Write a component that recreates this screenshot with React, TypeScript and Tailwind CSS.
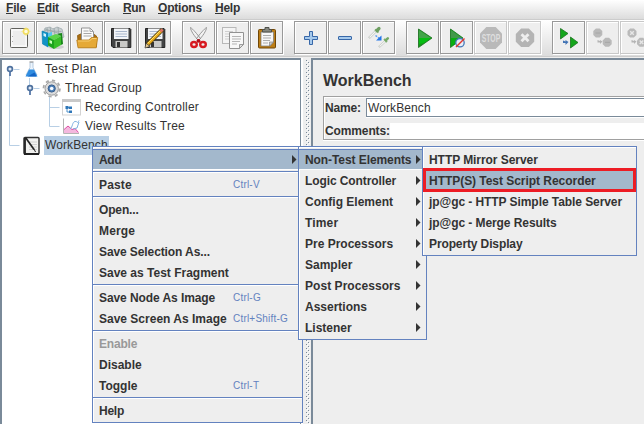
import React from "react";

const BOLD = "font-bold text-[12px] text-[#333333] whitespace-pre";

function Stop({ x, y, r, fill = "#b9b9b9" }: { x: number; y: number; r: number; fill?: string }) {
  const k = r * 0.42;
  return (
    <path
      fill={fill}
      d={`M${x - k} ${y - r}H${x + k}L${x + r} ${y - k}V${y + k}L${x + k} ${y + r}H${x - k}L${x - r} ${y + k}V${y - k}Z`}
    />
  );
}

function Floppy() {
  return (
    <>
      <path d="M7.500 7.500h18.500l.8.8v18.200H9l-1.500-1.500z" fill="#434445" stroke="#222" />
      <rect x="10" y="7.500" width="14.500" height="10.500" fill="#f3f5f8" />
      <path d="M11.500 10.500h11.500M11.500 13h11.500M11.500 15.500h11.500" stroke="#a9b7cc" strokeWidth="1" />
      <rect x="11.500" y="20" width="12" height="6.500" fill="#c9c9c7" />
      <rect x="13" y="21" width="3" height="5" fill="#333" />
    </>
  );
}

const icons = {
  blank: (
    <>
      <rect x="8.500" y="7.500" width="17" height="19" rx="1" fill="#f3f3f3" stroke="#62625e" />
      <rect x="10" y="9" width="14" height="16" fill="#ededed" stroke="#fff" />
      <path d="M10.500 15v1M10.500 20v1" stroke="#aaa" />
      <circle cx="24" cy="10.500" r="2.600" fill="#fffbe0" stroke="#f1dd62" strokeWidth="1.600" />
      <path d="M24 6v1.500M24 13.500V15M19.500 10.500H21M27 10.500h1.500" stroke="#f6e88f" />
    </>
  ),
  templates: (
    <>
      <ellipse cx="20" cy="26" rx="8" ry="2" fill="#cfcfcf" />
      <path d="M7 12l2-5 5-1 3 2 4-2 5 2 2 8-8 4-12 2z" fill="#c9d0d2" stroke="#9aa5a9" strokeWidth=".7" />
      <path d="M11 7l2 9M14 6l2 10M18 7l1 8M22 6l1 9M8.500 9.500l17 1M9 8l16 5" stroke="#98a4a7" strokeWidth=".8" />
      <path d="M6 10l6 2v14l-5.500-3z" fill="#1193c5" stroke="#087ab1" strokeWidth=".6" />
      <path d="M12 12l4-1v11l-4 4z" fill="#56c6ec" />
      <path d="M7.500 12v3l2.500 1v-3z" fill="#d5f3ff" />
      <path d="M12 16l8-3 5 2-7 4z" fill="#5bd549" />
      <path d="M12 16l6 3v9l-6-3.500z" fill="#1ca41c" />
      <path d="M18 19l7-4v9l-7 4z" fill="#38be27" />
      <path d="M21 13l5-1 1 11-2 1V15z" fill="#188718" />
      <path d="M13.500 19v3l2.500 1v-3z" fill="#caffbb" />
    </>
  ),
  open: (
    <>
      <path d="M7.500 14.500l3-1.500h13l3 2v11H8.500z" fill="#a96d12" stroke="#8a590a" strokeWidth=".8" />
      <path d="M11.500 7h8.500l3.500 3.500V20h-12z" fill="#fafafa" stroke="#929292" />
      <path d="M13.500 10h5M13.500 12.500h8M13.500 15h8M20 7v3.500h3" stroke="#a8a8a8" fill="none" />
      <path d="M6.800 19h12l2.500-2.500h6.400l-1.500 10.300H8z" fill="#e5a936" stroke="#b67b18" strokeWidth=".8" />
      <path d="M8 20h11.500l2.500-2.500h4.500" stroke="#f8ce70" fill="none" />
    </>
  ),
  save: <Floppy />,
  saveAs: (
    <>
      <Floppy />
      <path d="M9 24L24.500 8.500" stroke="#49360a" strokeWidth="4.200" />
      <path d="M9.500 23.500L23 10" stroke="#e8a91b" strokeWidth="2.800" />
      <path d="M9.500 22.500L22 10" stroke="#ffe36b" strokeWidth="1" />
      <path d="M22.500 10.500l2-2" stroke="#dd7465" strokeWidth="3" />
      <path d="M7 27l1-5 4 3.500z" fill="#e4c991" stroke="#333" strokeWidth=".7" />
    </>
  ),
  cut: (
    <>
      <path d="M8.500 6.500c0 3 4 9 8 13l2-2C15 13 11 8 8.500 6.500zM24.500 6.500c0 3-4 9-8 13l-2-2c3.500-4.500 7.500-9.500 10-11z" fill="#f3f3f3" stroke="#8c8c8c" strokeWidth=".9" />
      <path d="M15 19l3 2M18 19l-3 2" stroke="#b51018" strokeWidth="2.500" />
      <ellipse cx="12" cy="23.500" rx="2.800" ry="2.500" fill="#eee" stroke="#d71920" strokeWidth="2.400" />
      <ellipse cx="21" cy="23.500" rx="2.800" ry="2.500" fill="#eee" stroke="#d71920" strokeWidth="2.400" />
    </>
  ),
  copy: (
    <>
      <rect x="6.500" y="6.500" width="13.500" height="16" fill="#f4f4f4" stroke="#b8b8b8" />
      <path d="M9 10.500h8M9 13h8M9 15.500h4M9 18h4" stroke="#cfcfcf" />
      <path d="M13.500 11.500h14v12l-4 4h-10z" fill="#f8f8f8" stroke="#929292" />
      <path d="M16 15.500h9M16 18h9M16 20.500h8M16 23h5" stroke="#b5b5b5" />
      <path d="M23.500 27.500v-4h4z" fill="#ddd" stroke="#888" strokeWidth=".8" />
    </>
  ),
  paste: (
    <>
      <rect x="8.500" y="8.500" width="17" height="18.500" rx="1" fill="#bd7e16" stroke="#704707" />
      <path d="M11 11h12.500v10l-3.500 4h-9z" fill="#f7f7f7" stroke="#777" strokeWidth=".7" />
      <path d="M13 14.500h8M13 17h8M13 19.500h7M13 22h5" stroke="#adadad" />
      <path d="M19.500 25v-4h4z" fill="#ccc" stroke="#777" strokeWidth=".6" />
      <path d="M12.500 11V8.500h2.500V6.500h4v2h2.500V11z" fill="#85877f" stroke="#4d4f49" />
    </>
  ),
  plus: <path d="M15.500 10.500h3v5h5v3h-5v5h-3v-5h-5v-3h5z" fill="#a5c9ec" stroke="#3767a8" strokeLinejoin="round" />,
  minus: <rect x="10.500" y="15.500" width="13" height="3" rx=".4" fill="#a5c9ec" stroke="#3767a8" />,
  toggle: (
    <>
      <path d="M7 17l8-8" stroke="#b9beb7" strokeWidth="2.400" />
      <path d="M7.500 16.500l7-7" stroke="#f4f6f4" strokeWidth="1.200" />
      <path d="M13 8.500l3.500 3" stroke="#7fae72" strokeWidth="2" />
      <path d="M15 9.500l2-2" stroke="#6d9e61" strokeWidth="3.200" strokeLinecap="round" />
      <path d="M17 26l6.500-6" stroke="#b9beb7" strokeWidth="2.200" />
      <path d="M17.500 25.500l6-5.500" stroke="#f4f6f4" strokeWidth="1.100" />
      <path d="M22 18l3 3" stroke="#7fae72" strokeWidth="1.800" />
      <path d="M24 19l1.800-1.600" stroke="#74a866" strokeWidth="2.600" strokeLinecap="round" />
      <path d="M13.500 14.500l4 3" stroke="#5e9cec" strokeWidth="1.500" strokeDasharray="2 1" />
      <path d="M19.500 14.500v5h-5.500z" fill="#2476e8" />
    </>
  ),
  start: (
    <>
      <path d="M12.500 8l13.500 9-13.500 9.500z" fill="#159a18" stroke="#17691b" strokeWidth=".8" />
      <path d="M13 9l12 8H13z" fill="#42a548" />
      <path d="M13 17h12l-7 5-5 1z" fill="#07bd13" />
    </>
  ),
  startNoPause: (
    <>
      <path d="M10.500 8L23 17l-12.500 9.500z" fill="#08af10" stroke="#176e1b" strokeWidth=".8" />
      <path d="M11 9l11 8H11z" fill="#42994a" />
      <circle cx="20" cy="21.700" r="4.200" fill="#e6edf8" stroke="#4679b8" strokeWidth="1.300" />
      <path d="M16 26l8.500-8.500" stroke="#e5372c" strokeWidth="1.400" />
    </>
  ),
  stop: (
    <>
      <Stop x={17} y={17} r={11} />
      <text x="17" y="21" textAnchor="middle" textLength="18.500" lengthAdjust="spacingAndGlyphs" className="fill-[#dedede] text-[11px] font-bold">STOP</text>
    </>
  ),
  shutdown: (
    <>
      <Stop x={17} y={16.8} r={9.2} fill="#b4b4b4" />
      <path d="M13.500 13.300l7 7M20.500 13.300l-7 7" stroke="#eee" strokeWidth="2.800" />
    </>
  ),
  remoteStart: (
    <>
      <path d="M8.500 7.500l7.500 5-7.500 5.500z" fill="#14a51b" stroke="#1c741f" strokeWidth=".8" />
      <path d="M18.500 16l7.500 5.500-7.500 5.500z" fill="#14a51b" stroke="#1c741f" strokeWidth=".8" />
      <path d="M11 19.500v2.500h2.500v2l3-3-3-2v1.500z" fill="#4273b4" />
    </>
  ),
  remoteStop: (
    <>
      <Stop x={11.8} y={12} r={4.5} />
      <Stop x={21.2} y={21.3} r={4.5} />
      <path d="M9.500 12h5M19 21.300h5" stroke="#a6a6a6" />
      <path d="M11.500 19v2.500H14V23l2.500-2.500L14 19v1z" fill="#b4b4b4" />
    </>
  ),
  remoteShutdown: (
    <>
      <Stop x={12} y={12} r={4.5} />
      <Stop x={21.5} y={21.3} r={4.5} />
      <path d="M10.200 10.200l3.600 3.600M13.800 10.200l-3.600 3.600M19.700 19.500l3.600 3.600M23.300 19.500l-3.600 3.600" stroke="#e6e6e6" strokeWidth="1.400" />
      <path d="M11.500 19v2.500H14V23l2.500-2.500L14 19v1z" fill="#b4b4b4" />
    </>
  ),
};

type IconName = keyof typeof icons;

const toolbar: IconName[][] = [
  ["blank", "templates", "open", "save", "saveAs"],
  ["cut", "copy", "paste"],
  ["plus", "minus", "toggle"],
  ["start", "startNoPause", "stop", "shutdown"],
  ["remoteStart", "remoteStop", "remoteShutdown"],
];
const disabled: IconName[] = ["stop", "shutdown", "remoteStop", "remoteShutdown"];

function ToolButton({ name }: { name: IconName }) {
  return (
    <button
      className={`block h-[33px] w-[33px] shrink-0 border bg-[#eeeeee] shadow-[inset_1px_1px_0_#fff,1px_1px_0_#fff] ${
        disabled.includes(name) ? "border-[#c8c8c8]" : "border-[#999999]"
      }`}
    >
      <svg width="31" height="31" viewBox="1 1 31 31" className="block">
        {icons[name]}
      </svg>
    </button>
  );
}

function MenuBar() {
  const items: [string, string][] = [
    ["File", "w-[31px] tracking-[-0.2px]"],
    ["Edit", "w-[34px] tracking-[-0.2px]"],
    ["Search", "w-[52px] tracking-[-0.2px]"],
    ["Run", "w-[35px] tracking-[-0.4px]"],
    ["Options", "w-[57px] tracking-[-0.2px]"],
    ["Help", "w-[40px] tracking-[-0.25px]"],
  ];
  return (
    <nav className="flex h-[19px] shrink-0 bg-linear-to-b from-white to-[#dcdcdc] pl-[6px]">
      {items.map(([label, width]) => (
        <span key={label} className={`${BOLD} ${width} leading-[16px]`}>
          {label === "Search" ? (
            label
          ) : (
            <>
              <span className="inline-block h-[14px] border-b border-[#333] leading-[16px]">{label[0]}</span>
              {label.slice(1)}
            </>
          )}
        </span>
      ))}
    </nav>
  );
}

function TreeRow({ indent, icon, label, selected, tracking }: { indent: string; icon: React.ReactNode; label: string; selected?: boolean; tracking: string }) {
  return (
    <div className={`flex h-[19px] items-center ${indent}`}>
      <svg width="20" height="19" viewBox="0 0 20 19" className="shrink-0 overflow-visible">{icon}</svg>
      <span className={`h-[19px] px-px text-[12px] leading-[19px] whitespace-pre text-[#333333] ${tracking} ${selected ? "bg-[#b8cfe5]" : ""}`}>{label}</span>
    </div>
  );
}

function Handle({ x, y }: { x: number; y: number }) {
  return (
    <>
      <path d={`M${x} ${y + 2}v5`} stroke="#5577a8" strokeWidth="1.800" />
      <circle cx={x} cy={y} r="2.400" fill="#dfe8f5" stroke="#4f729f" strokeWidth="1.700" />
      <path d={`M${x + 3.5} ${y + 0.5}h6`} stroke="#b8cfe5" />
    </>
  );
}

function Tree() {
  return (
    <div className="relative w-[301px] shrink-0 border-t-2 border-r border-l-2 border-[#7a8a99] bg-white">
      <svg className="absolute top-0 left-0" width="70" height="100" viewBox="2 60 70 100">
        <path d="M9.500 74v71.500h10M29.500 78v8M49.500 97v29.500h10M49.500 107.500h10" fill="none" stroke="#b8cfe5" />
        <Handle x={10} y={69} />
        <Handle x={30} y={88} />
      </svg>
      <TreeRow
        indent="pl-[22px]"
        label="Test Plan"
        tracking="tracking-[0.25px]"
        icon={
          <>
            <path d="M6 2.500v5L2 15h11L9 7.500v-5z" fill="#edf5fc" stroke="#a5bed8" strokeWidth=".8" />
            <path d="M5 9.500h5l3.500 7H1.500z" fill="#318de0" />
            <path d="M3.500 16.500h9l-2-4z" fill="#1565c5" />
            <path d="M5.500 2h4" stroke="#aaa" strokeWidth="1.500" />
          </>
        }
      />
      <TreeRow
        indent="pl-[42px]"
        label="Thread Group"
        tracking="tracking-[0.18px]"
        icon={
          <>
            <circle cx="7.700" cy="9.500" r="8.200" fill="none" stroke="#a9a9a9" strokeWidth="1.800" strokeDasharray="3.200 3.240" />
            <circle cx="7.700" cy="9.500" r="6.700" fill="#dcdcdc" stroke="#9c9c9c" />
            <circle cx="7.700" cy="9.500" r="3.600" fill="#4a7fb8" stroke="#385d8b" />
            <circle cx="7.700" cy="9.500" r="1.800" fill="#f5f9ff" />
          </>
        }
      />
      <TreeRow
        indent="pl-[62px]"
        label="Recording Controller"
        tracking="tracking-[0.2px]"
        icon={
          <>
            <rect x="-1.500" y="1.500" width="18" height="15.500" fill="#fff" stroke="#d3d3d3" />
            <rect x="-2" y="1" width="19" height="3" fill="#c9c9c9" />
            <path d="M3 8v6h3M3 9.500h3" fill="none" stroke="#4f91ca" />
            <path d="M1.500 8h3v3h-3zM5 8.500h3v2.500H5zM5 12.500h3V15H5z" fill="#3077b8" />
          </>
        }
      />
      <TreeRow
        indent="pl-[62px]"
        label="View Results Tree"
        tracking="tracking-[0.2px]"
        icon={
          <>
            <path d="M-.500 16v-3l4.500-3.500 4 3 3-1 3.500 4.500z" fill="#f4b8de" />
            <path d="M-.500 13l4.500-4 4 3.500 3-1 3.500 4" fill="none" stroke="#dd4aa3" />
            <path d="M6 12c3-2 2-7 5-7.500s2 3 4-1M9 12l4-1 2-6" fill="none" stroke="#7fb0e0" />
            <path d="M-.500 1.500V16.500H15" fill="none" stroke="#b4b4b4" />
          </>
        }
      />
      <TreeRow
        indent="pl-[22px]"
        label="WorkBench"
        tracking="tracking-[0.1px]"
        selected
        icon={
          <>
            <rect x="0" y="1.500" width="15" height="16.500" rx="1" fill="#f1f1ef" stroke="#343434" strokeWidth="1.500" />
            <path d="M1 2v16M0 18h15" stroke="#222" strokeWidth="1.800" />
            <path d="M5 6h8M5 8.500h8M5 11h8M5 13.500h8" stroke="#d0d0d0" />
            <path d="M1.500 1.500l8.500 12" stroke="#222" strokeWidth="1.700" />
            <path d="M10 13l1.500 3" stroke="#222" />
          </>
        }
      />
    </div>
  );
}

function Splitter() {
  return (
    <div className="flex w-[10px] shrink-0 border-l-2 border-white bg-[#eeeeee] pt-[2px] pl-[3px]">
      <svg width="4" height="364">
        <defs>
          <pattern id="bumps" width="4" height="4" patternUnits="userSpaceOnUse">
            <rect width="1" height="1" fill="#7a8a99" />
            <rect x="1" y="1" width="1" height="1" fill="#fff" />
            <rect x="2" y="2" width="1" height="1" fill="#7a8a99" />
            <rect x="3" y="3" width="1" height="1" fill="#fff" />
          </pattern>
        </defs>
        <rect width="4" height="364" fill="url(#bumps)" />
      </svg>
    </div>
  );
}

function Editor() {
  return (
    <section className="flex flex-1 flex-col border-t-2 border-l-2 border-[#7a8a99] bg-[#eeeeee] pl-[10px]">
      <h1 className="h-[36px] pt-[9px] text-[16px] leading-[24px] font-bold text-[#333]">WorkBench</h1>
      <div className="flex h-[44px] flex-col border-y border-l border-[#a0a0a0] shadow-[inset_1px_1px_0_#fff,0_1px_0_#fff]">
        <div className="flex h-[20px] pt-px">
          <span className={`${BOLD} w-[42px] pl-px leading-[21px] tracking-[-0.15px]`}>Name:</span>
          <div className="h-[19px] flex-1 border-y border-l border-[#7a8a99] bg-white pl-px text-[12px] leading-[19px] tracking-[0.1px] text-[#333] shadow-[0_1px_0_#fff]">WorkBench</div>
        </div>
        <div className="mt-[6px] flex h-[16px]">
          <span className={`${BOLD} w-[66px] pl-px leading-[17px] tracking-[-0.12px]`}>Comments:</span>
          <div className="flex-1 bg-white" />
        </div>
      </div>
    </section>
  );
}

type Entry = { label: string; keys?: string; sub?: boolean; active?: boolean; off?: boolean; tracking?: string } | null;

function Menu({ entries, place }: { entries: Entry[]; place: string }) {
  return (
    <div className={`absolute top-[146px] border border-[#6382bf] bg-[#eeeeee] pt-[2px] pb-px shadow-[inset_1px_1px_0_#fff] ${place}`}>
      {entries.map((e, i) =>
        e === null ? (
          <div key={i} className="h-[4px] pt-px">
            <div className="h-[2px] border-t border-b border-t-[#6382bf] border-b-white" />
          </div>
        ) : (
          <div
            key={i}
            className={`relative flex h-[21px] items-center pl-[6px] ${
              e.active ? "border-t border-b border-t-[#6382bf] border-b-white bg-[#a3b8cc]" : ""
            }`}
          >
            <span className={`font-bold text-[12px] whitespace-pre ${e.off ? "text-[#999999]" : "text-[#333333]"} ${e.tracking ?? ""}`}>{e.label}</span>
            {e.keys && <span className="absolute left-[140px] text-[10px] tracking-[0.2px] whitespace-pre text-[#6382bf]">{e.keys}</span>}
            {e.sub && (
              <svg className={e.label === "Add" ? "absolute left-[199px]" : "absolute right-[5px]"} width="5" height="9" viewBox="0 0 5 9">
                <path d="M0 0v9l4.500-4.500z" fill="#333" />
              </svg>
            )}
          </div>
        ),
      )}
    </div>
  );
}

const contextMenu: Entry[] = [
  { label: "Add", sub: true, active: true, tracking: "tracking-[-0.3px]" },
  null,
  { label: "Paste", keys: "Ctrl-V", tracking: "tracking-[0.15px]" },
  null,
  { label: "Open...", tracking: "tracking-[-0.15px]" },
  { label: "Merge", tracking: "tracking-[0.15px]" },
  { label: "Save Selection As...", tracking: "tracking-[-0.1px]" },
  { label: "Save as Test Fragment" },
  null,
  { label: "Save Node As Image", keys: "Ctrl-G", tracking: "tracking-[-0.08px]" },
  { label: "Save Screen As Image", keys: "Ctrl+Shift-G" },
  null,
  { label: "Enable", off: true, tracking: "tracking-[-0.2px]" },
  { label: "Disable" },
  { label: "Toggle", keys: "Ctrl-T" },
  null,
  { label: "Help", tracking: "tracking-[-0.25px]" },
];

const addMenu: Entry[] = [
  { label: "Non-Test Elements", sub: true, active: true, tracking: "tracking-[-0.08px]" },
  { label: "Logic Controller", sub: true, tracking: "tracking-[-0.1px]" },
  { label: "Config Element", sub: true },
  { label: "Timer", sub: true, tracking: "tracking-[0.15px]" },
  { label: "Pre Processors", sub: true },
  { label: "Sampler", sub: true },
  { label: "Post Processors", sub: true, tracking: "tracking-[0.05px]" },
  { label: "Assertions", sub: true },
  { label: "Listener", sub: true },
];

const nonTestMenu: Entry[] = [
  { label: "HTTP Mirror Server", tracking: "tracking-[-0.06px]" },
  { label: "HTTP(S) Test Script Recorder", active: true, tracking: "tracking-[-0.04px]" },
  { label: "jp@gc - HTTP Simple Table Server", tracking: "tracking-[-0.07px]" },
  { label: "jp@gc - Merge Results", tracking: "tracking-[-0.07px]" },
  { label: "Property Display", tracking: "tracking-[-0.12px]" },
];

export default function App() {
  return (
    <div className="relative flex h-[424px] w-[644px] flex-col overflow-hidden bg-[#eeeeee] font-['Liberation_Sans',Arial,sans-serif]">
      <MenuBar />
      <div className="flex h-[38px] shrink-0 gap-[11px] overflow-hidden border-t border-b border-t-[#cccccc] border-b-[#cccccc] bg-linear-to-b from-white to-[#dcdcdc] pt-px pl-[2px]">
        {toolbar.map((group, i) => (
          <div key={i} className="flex shrink-0 gap-px">
            {group.map((name) => (
              <ToolButton key={name} name={name} />
            ))}
          </div>
        ))}
      </div>
      <main className="mt-px flex flex-1">
        <Tree />
        <Splitter />
        <Editor />
      </main>
      <Menu entries={contextMenu} place="left-[92px] w-[211px]" />
      <Menu entries={addMenu} place="left-[298px] w-[129px]" />
      <Menu entries={nonTestMenu} place="left-[422px] w-[215px]" />
      <div className="absolute top-[168px] left-[423px] h-[24px] w-[213px] border-3 border-[#ed1c24]" />
    </div>
  );
}
